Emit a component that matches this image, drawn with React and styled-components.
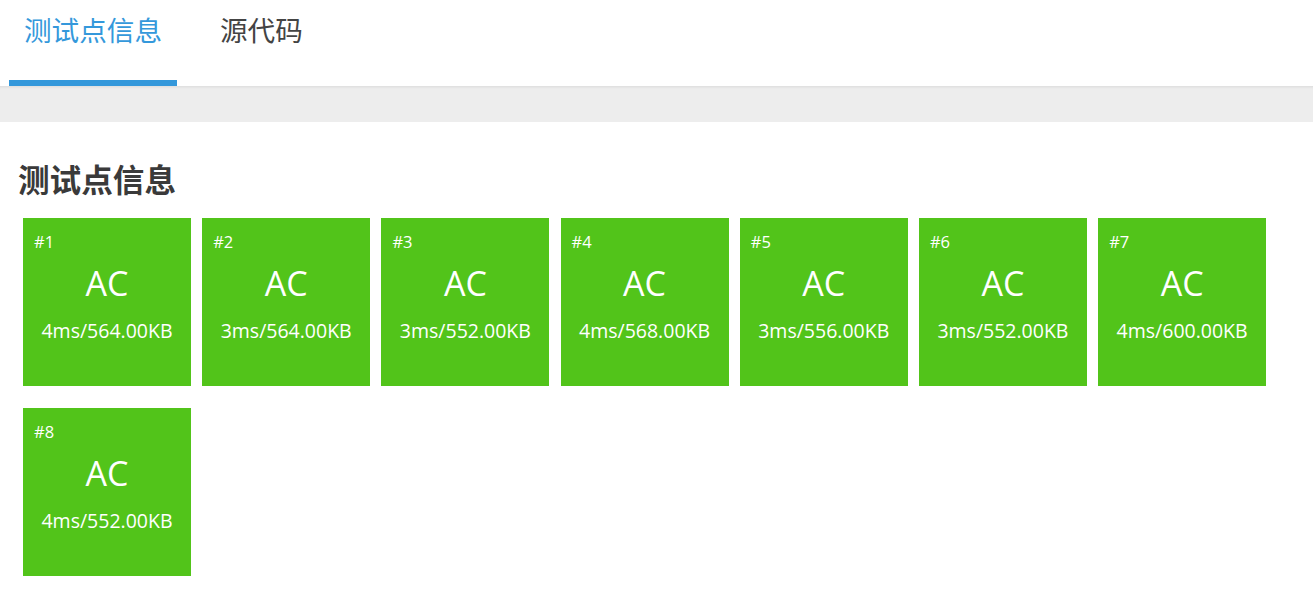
import React from 'react';
import styled, { createGlobalStyle } from 'styled-components';

const GlobalStyle = createGlobalStyle`
  body {
    margin: 0;
    background: #ffffff;
    font-family: "Open Sans", "Noto Sans CJK SC", sans-serif;
    color: #333333;
  }
`;

const TabBar = styled.nav`
  display: flex;
  gap: 28px;
  height: 86px;
  padding-left: 9px;
  background: #ffffff;
`;

const Tab = styled.div`
  height: 80px;
  padding: 0 15px;
  font-family: "Noto Sans CJK SC", sans-serif;
  font-size: 27.6px;
  line-height: 58px;
  color: ${(p) => (p.active ? '#3498db' : '#444444')};
  border-bottom: 6px solid ${(p) => (p.active ? '#3498db' : 'transparent')};
`;

const Band = styled.div`
  height: 36px;
  background: #ededed;
  box-shadow: inset 0 3px 3px -2px rgba(0, 0, 0, 0.08);
`;

const Main = styled.main`
  padding: 36px 18px 30px;
`;

const Heading = styled.h2`
  margin: 0 0 20px;
  font-family: "Noto Sans CJK SC", sans-serif;
  font-size: 31.6px;
  font-weight: 700;
  line-height: 40px;
  color: #3a3a3a;
`;

const Cases = styled.div`
  display: flex;
  flex-wrap: wrap;
  column-gap: 11.2px;
  row-gap: 22px;
  padding-left: 5px;
`;

const Card = styled.div`
  display: flex;
  flex-direction: column;
  width: 168px;
  height: 168px;
  box-sizing: border-box;
  padding: 13px 11px 0;
  background: #52c41a;
  color: #ffffff;
`;

const Label = styled.div`
  font-size: 16.5px;
  font-weight: 500;
  line-height: 22px;
`;

const Status = styled.div`
  margin-top: 10px;
  text-align: center;
  font-size: 34px;
  line-height: 40px;
`;

const Usage = styled.div`
  margin-top: 16px;
  margin-left: -6px;
  margin-right: -6px;
  text-align: center;
  font-size: 19.5px;
  font-weight: 500;
  line-height: 24px;
  white-space: nowrap;
`;

const cases = [
  ['4ms', '564.00KB'],
  ['3ms', '564.00KB'],
  ['3ms', '552.00KB'],
  ['4ms', '568.00KB'],
  ['3ms', '556.00KB'],
  ['3ms', '552.00KB'],
  ['4ms', '600.00KB'],
  ['4ms', '552.00KB'],
];

export default function App() {
  return (
    <>
      <GlobalStyle />
      <TabBar>
        <Tab active>测试点信息</Tab>
        <Tab>源代码</Tab>
      </TabBar>
      <Band />
      <Main>
        <Heading>测试点信息</Heading>
        <Cases>
          {cases.map(([time, mem], i) => (
            <Card key={i}>
              <Label>#{i + 1}</Label>
              <Status>AC</Status>
              <Usage>
                {time}/{mem}
              </Usage>
            </Card>
          ))}
        </Cases>
      </Main>
    </>
  );
}
